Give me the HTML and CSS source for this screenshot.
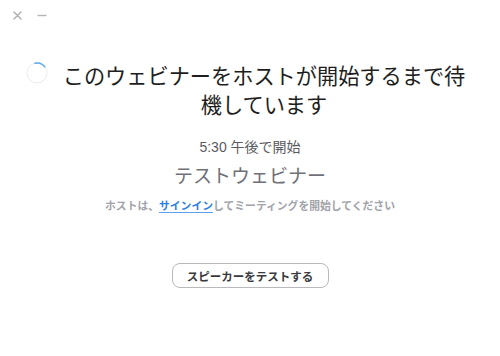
FILE: index.html
```html
<!DOCTYPE html>
<html lang="ja">
<head>
<meta charset="utf-8">
<link rel="stylesheet" href="styles.css">
</head>
<body>
<div class="window">
  <div class="titlebar">
    <svg class="close" width="9" height="9" viewBox="0 0 9 9"><path d="M1 1L8 8M8 1L1 8" stroke="#b4b4b4" stroke-width="1.6" stroke-linecap="round"/></svg>
    <svg class="minimize" width="10" height="3" viewBox="0 0 10 3"><path d="M0.5 1.5H9.5" stroke="#b4b4b4" stroke-width="1.4"/></svg>
  </div>
  <div class="main">
    <div class="heading">
      <svg class="spinner" width="22" height="22" viewBox="0 0 22 22">
        <circle cx="11" cy="11" r="10" fill="none" stroke="#ececef" stroke-width="1"/>
        <path d="M8.41 1.34A10 10 0 0 1 19.19 5.26" fill="none" stroke="#5aaaf0" stroke-width="1.5"/>
      </svg>
      <h1 class="title">このウェビナーをホストが開始するまで待機しています</h1>
    </div>
    <p class="time">5:30 午後で開始</p>
    <p class="name">テストウェビナー</p>
    <p class="note">ホストは、<a class="signin" href="#">サインイン</a>してミーティングを開始してください</p>
    <div class="actions"><button class="test-btn">スピーカーをテストする</button></div>
  </div>
</div>
</body>
</html>
```

FILE: styles.css
```css
html, body {
  margin: 0;
  padding: 0;
  background: #ffffff;
}
body {
  font-family: "Liberation Sans", "Noto Sans CJK JP", sans-serif;
  width: 500px;
  height: 356px;
  overflow: hidden;
}
.window {
  width: 500px;
  height: 356px;
}
.titlebar {
  height: 30px;
  display: flex;
  align-items: flex-start;
}
.close {
  margin-left: 13px;
  margin-top: 11px;
}
.minimize {
  margin-left: 15px;
  margin-top: 14px;
}
.main {
  padding-top: 32px;
}
.heading {
  display: flex;
  align-items: flex-start;
  padding-left: 26px;
}
.spinner {
  flex: none;
  display: block;
}
.title {
  margin: 0 0 0 12px;
  width: 408px;
  font-size: 21.2px;
  line-height: 29px;
  font-weight: 400;
  color: #1e1e1e;
  text-align: center;
}
.time {
  margin: 17px 0 0;
  font-size: 14px;
  line-height: 20px;
  color: #5a5a5f;
  text-align: center;
}
.name {
  margin: 7px 0 0;
  font-size: 19px;
  line-height: 26px;
  color: #707078;
  text-align: center;
}
.note {
  margin: 8px 0 0;
  font-size: 10.8px;
  line-height: 16px;
  font-weight: 700;
  color: #a2a2aa;
  text-align: center;
}
.signin {
  color: #2d7fe0;
  text-decoration: none;
  border-bottom: 1px solid #5aa0f0;
}
.actions {
  display: flex;
  justify-content: center;
  margin-top: 49px;
}
.test-btn {
  width: 157px;
  height: 25px;
  border: 1px solid #b9b9bd;
  border-radius: 8px;
  background: #ffffff;
  font-family: "Liberation Sans", "Noto Sans CJK JP", sans-serif;
  font-size: 11.5px;
  font-weight: 700;
  color: #3a3a3e;
  padding: 0;
}
```
